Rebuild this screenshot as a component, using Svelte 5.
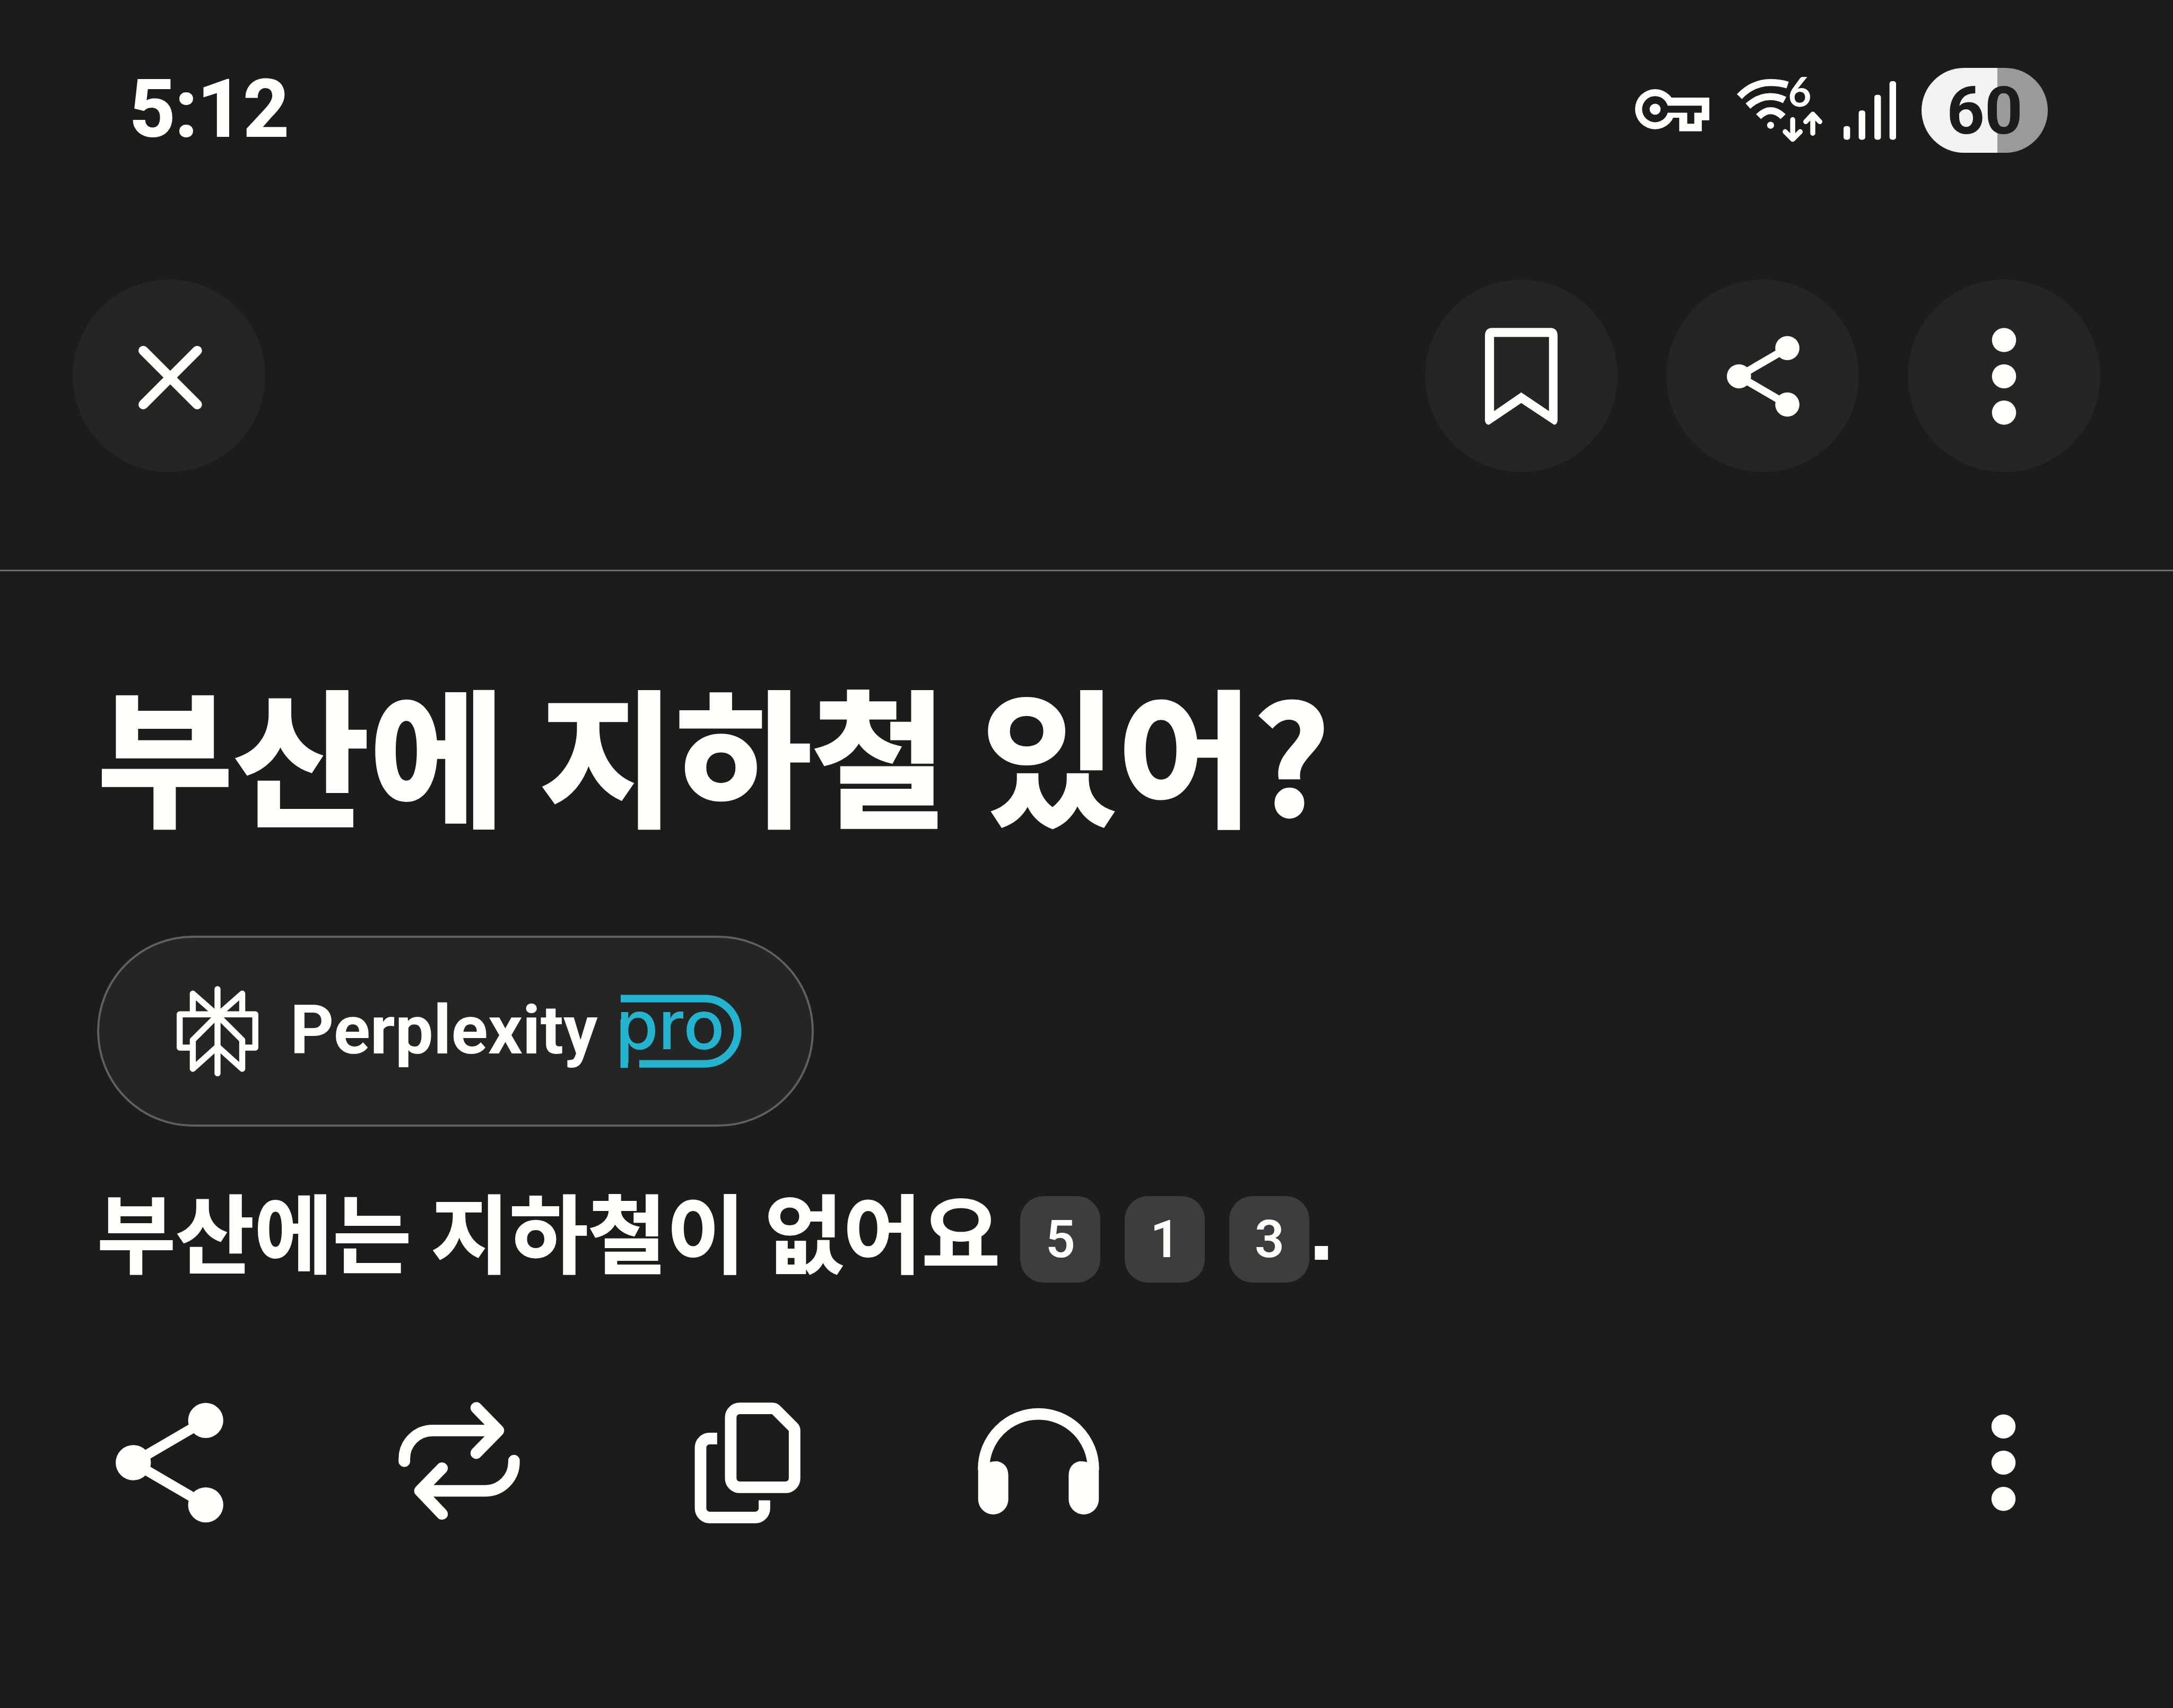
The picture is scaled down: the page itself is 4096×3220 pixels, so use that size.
<script>
  const sources = [5, 1, 3];
</script>

<main class="screen">
  <div class="status">
    <time class="clock">5:12</time>
    <div class="indicators">
      <svg class="key" viewBox="0 0 148 84" role="img" aria-label="VPN">
        <circle class="solid" cx="40" cy="40" r="40" />
        <path class="solid" d="M40 17H148V62H133V84H88V57H40Z" />
        <circle class="hole" cx="40" cy="40" r="26" />
        <path class="hole" d="M60 33H133V47H118V69H104V47H60Z" />
        <circle class="solid" cx="40" cy="40" r="11" />
      </svg>
      <svg class="wifi" viewBox="0 0 170 128" role="img" aria-label="Wi-Fi 6">
        <g class="line butt" stroke-width="14">
          <path d="M5 37Q32 9 66 9Q86 9 101 14" />
          <path d="M22 56Q43 37 66 37Q82 37 95 44" />
          <path d="M43 77Q55 65 67 65Q80 65 92 77" />
        </g>
        <circle class="solid" cx="67" cy="94" r="7" />
        <text class="wifi-gen" x="102" y="57">6</text>
        <g class="line" stroke-width="10">
          <path d="M111 83V121M96 107L111 122L126 107" />
          <path d="M151 110V72M137 87L151 72L165 87" />
        </g>
      </svg>
      <svg class="signal" viewBox="0 0 104 116" role="img" aria-label="Signal">
        <g class="solid">
          <rect x="0" y="89" width="13" height="27" rx="5" />
          <rect x="30" y="58" width="13" height="58" rx="5" />
          <rect x="61" y="27" width="13" height="89" rx="5" />
          <rect x="91" y="0" width="13" height="116" rx="5" />
        </g>
      </svg>
      <span class="battery">60</span>
    </div>
  </div>

  <header class="toolbar">
    <button class="round" aria-label="Close">
      <svg viewBox="0 0 382 382"><path class="line" stroke-width="19" d="M140 141L247 248M247 141L140 248" /></svg>
    </button>
    <div class="tools">
      <button class="round" aria-label="Bookmark">
        <svg viewBox="0 0 382 382">
          <path class="solid" fill-rule="evenodd" d="M133 96H249Q263 96 263 112V280Q262 288 256 288L191 245L127 288Q120 288 119 280V112Q119 96 133 96ZM137 114V261L191 224L246 261V114Z" />
        </svg>
      </button>
      <button class="round" aria-label="Share">
        <svg viewBox="0 0 382 382">
          <path class="line" stroke-width="15" d="M240 136L144 192L240 248" />
          <g class="solid"><circle cx="240" cy="136" r="24" /><circle cx="144" cy="192" r="24" /><circle cx="240" cy="248" r="24" /></g>
        </svg>
      </button>
      <button class="round" aria-label="More">
        <svg viewBox="0 0 382 382">
          <g class="solid"><circle cx="191" cy="120" r="24" /><circle cx="191" cy="192" r="24" /><circle cx="191" cy="264" r="24" /></g>
        </svg>
      </button>
    </div>
  </header>

  <article class="thread">
    <h1>부산에 지하철 있어?</h1>

    <button class="model">
      <svg class="mark" viewBox="0 0 162 177" aria-hidden="true">
        <g class="mark-lines">
          <path d="M81 5V172" />
          <path d="M32 55V14L81 57L130 14V55" />
          <path d="M32 121H6V55H156V121H130" />
          <path d="M81 57L32 106V163L81 119L130 163V106L81 57" />
        </g>
      </svg>
      <span class="brand">Perplexity</span>
      <svg class="pro" viewBox="0 0 241 146" role="img" aria-label="pro">
        <path d="M0 8H168A65 65 0 0 1 168 138H37" />
        <path d="M7 50V146" />
        <text x="-9" y="109">pro</text>
      </svg>
    </button>

    <p class="answer">
      <span>부산에는 지하철이 없어요</span>
      <span class="cites">
        {#each sources as n}
          <a class="cite" href="#source-{n}">{n}</a>
        {/each}
      </span>
      <span class="stop">.</span>
    </p>

    <div class="actions">
      <button aria-label="Share answer">
        <svg viewBox="0 0 288 288">
          <path class="line" stroke-width="20" d="M216 60L72 144L216 228" />
          <g class="solid"><circle cx="216" cy="60" r="35" /><circle cx="72" cy="144" r="35" /><circle cx="216" cy="228" r="35" /></g>
        </svg>
      </button>
      <button aria-label="Rewrite">
        <svg viewBox="0 0 288 288">
          <g class="line" stroke-width="23">
            <path d="M35 141V136A56 56 0 0 1 91 80H222M178 35L222 80L178 125" />
            <path d="M253 140V143A57 57 0 0 1 196 200H66M110 155L66 200L110 246" />
          </g>
        </svg>
      </button>
      <button aria-label="Copy">
        <svg viewBox="0 0 288 288">
          <g class="line butt" stroke-width="23">
            <path d="M126 36H191Q195 36 198 39L232 73Q235 76 235 80V175A18 18 0 0 1 217 193H126A18 18 0 0 1 108 175V54A18 18 0 0 1 126 36Z" />
            <path d="M81 96H66A18 18 0 0 0 48 114V235A18 18 0 0 0 66 253H157A18 18 0 0 0 175 235V219" />
          </g>
        </svg>
      </button>
      <button aria-label="Listen">
        <svg viewBox="0 0 288 288">
          <path class="line butt" stroke-width="23" d="M35 158V156A109 109 0 0 1 253 156V158" />
          <g class="solid">
            <path d="M24 155L48 143Q53 141 62 141Q84 146 84 170V217A30 30 0 0 1 24 217Z" />
            <path d="M264 155L240 143Q235 141 226 141Q204 146 204 170V217A30 30 0 0 0 264 217Z" />
          </g>
        </svg>
      </button>
      <button class="last" aria-label="More actions">
        <svg viewBox="0 0 288 288">
          <g class="solid"><circle cx="144" cy="72" r="24" /><circle cx="144" cy="144" r="24" /><circle cx="144" cy="216" r="24" /></g>
        </svg>
      </button>
    </div>
  </article>
</main>

<style>
  :global(body) {
    margin: 0;
    background: #1b1c1c;
  }

  .screen {
    --bg: #1b1c1c;
    --fg: #fffffb;
    --surface: #242626;
    min-height: 100vh;
    background: var(--bg);
    color: var(--fg);
    font-family: "Noto Sans CJK KR", "Noto Sans", sans-serif;
  }

  button {
    margin: 0;
    padding: 0;
    border: 0;
    background: none;
    color: inherit;
    font: inherit;
    cursor: pointer;
  }

  svg {
    display: block;
    overflow: visible;
  }

  .solid { fill: var(--fg); }
  .hole { fill: var(--bg); }
  .line {
    fill: none;
    stroke: var(--fg);
    stroke-linecap: round;
    stroke-linejoin: round;
  }
  .butt { stroke-linecap: butt; }

  .status {
    display: flex;
    align-items: center;
    justify-content: space-between;
    height: 416px;
    padding: 0 236px 0 244px;
    font-family: Roboto, sans-serif;
    font-weight: 700;
  }
  .clock {
    font-size: 150px;
    line-height: 180px;
    padding-bottom: 4px;
    -webkit-text-stroke: 2px currentColor;
  }
  .indicators {
    display: flex;
    align-items: center;
  }
  .key { width: 140px; margin-right: 52px; }
  .wifi { width: 161px; margin-right: 40px; }
  .signal { width: 99px; margin-right: 48px; }
  .wifi-gen {
    fill: var(--fg);
    font: 700 80px Lato, sans-serif;
  }
  .battery {
    width: 238px;
    padding-top: 4px;
    border-radius: 80px;
    background: linear-gradient(90deg, #f2f2f2 60%, #999b9b 60%);
    color: #1b1c1c;
    font-size: 125px;
    line-height: 156px;
    text-align: center;
  }

  .toolbar {
    display: flex;
    justify-content: space-between;
    padding: 111px 137px 184px;
    border-bottom: 3px solid #6c6d6d;
  }
  .tools {
    display: flex;
    gap: 92px;
  }
  .round {
    width: 363px;
    height: 363px;
    border-radius: 50%;
    background: var(--surface);
  }

  .thread {
    display: flex;
    flex-direction: column;
    align-items: flex-start;
    padding: 158px 183px 0;
  }
  h1 {
    margin: 0 0 169px;
    font-size: 279px;
    font-weight: 700;
    line-height: 360px;
    -webkit-text-stroke: 5px currentColor;
  }

  .model {
    display: flex;
    align-items: center;
    height: 360px;
    box-sizing: border-box;
    padding: 0 132px 0 146px;
    border: 4px solid #5f6060;
    border-radius: 180px;
    background: var(--surface);
  }
  .mark { width: 154px; }
  .mark-lines {
    fill: none;
    stroke: var(--fg);
    stroke-width: 12;
    stroke-linecap: round;
    stroke-linejoin: round;
  }
  .brand {
    margin: 0 44px 0 60px;
    padding-bottom: 4px;
    font: 700 128px/156px Roboto, sans-serif;
  }
  .pro { width: 228px; }
  .pro path {
    fill: none;
    stroke: #25b4d0;
    stroke-width: 15;
  }
  .pro text {
    fill: #25b4d0;
    font: 500 136px Inter, sans-serif;
  }

  .answer {
    display: flex;
    align-items: flex-end;
    margin: 94px 0 203px;
    font-size: 161px;
    font-weight: 700;
    line-height: 200px;
    -webkit-text-stroke: 2px currentColor;
  }
  .cites {
    display: flex;
    gap: 46px;
    margin-left: 38px;
  }
  .cite {
    width: 151px;
    border-radius: 44px;
    background: #3b3d3e;
    color: inherit;
    font: 600 98px/163px Roboto, sans-serif;
    text-align: center;
    text-decoration: none;
    -webkit-text-stroke: 0;
  }
  .stop {
    font-family: "Liberation Sans", sans-serif;
  }

  .actions {
    display: flex;
    align-self: stretch;
    gap: 273px;
  }
  .actions button {
    width: 273px;
    height: 273px;
  }
  .actions .last { margin-left: auto; }
</style>
